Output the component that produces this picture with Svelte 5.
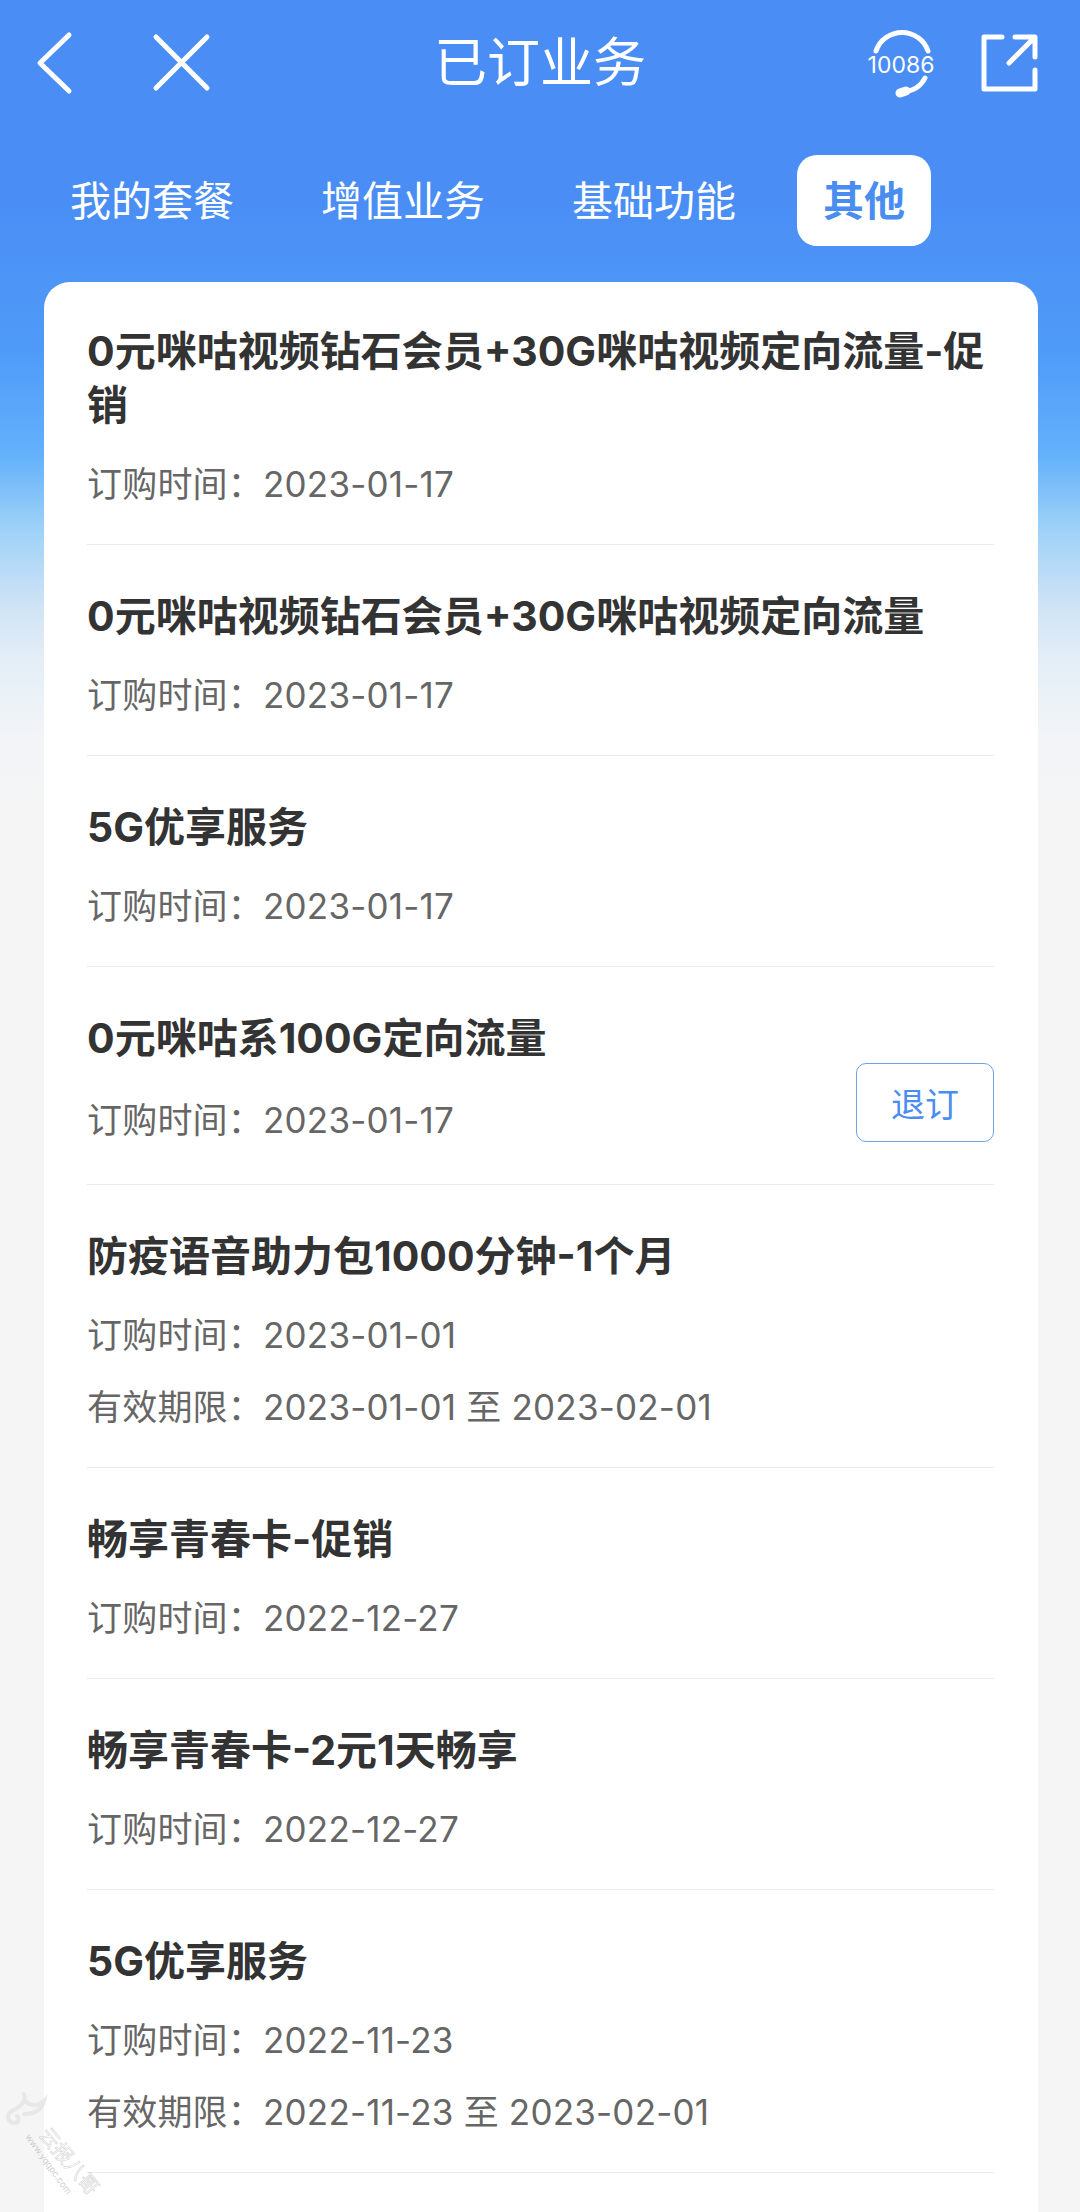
<script>
  const tabs = ["我的套餐", "增值业务", "基础功能", "其他"];
  const activeTab = "其他";

  const rows = [
    { name: "0元咪咕视频钻石会员+30G咪咕视频定向流量-促销", date: "2023-01-17" },
    { name: "0元咪咕视频钻石会员+30G咪咕视频定向流量", date: "2023-01-17" },
    { name: "5G优享服务", date: "2023-01-17" },
    { name: "0元咪咕系100G定向流量", date: "2023-01-17", cancel: true },
    { name: "防疫语音助力包1000分钟-1个月", date: "2023-01-01", range: "2023-01-01 至 2023-02-01" },
    { name: "畅享青春卡-促销", date: "2022-12-27" },
    { name: "畅享青春卡-2元1天畅享", date: "2022-12-27" },
    { name: "5G优享服务", date: "2022-11-23", range: "2022-11-23 至 2023-02-01" }
  ];
</script>

<div class="page">
  <header class="nav">
    <div class="nav-side">
      <svg class="icon" viewBox="0 0 64 64"><path d="M45 5 16 33l29 28" /></svg>
      <svg class="icon close" viewBox="0 0 64 64"><path d="M8 7l51 51M59 7 8 58" /></svg>
    </div>
    <h1>已订业务</h1>
    <div class="nav-side right">
      <svg class="icon" viewBox="0 0 64 64">
        <path d="M6 21A27.5 27.5 0 0 1 58 21" />
        <text x="31" y="43">10086</text>
        <path d="M55 48C51 56 44 61 33 62" />
        <path class="thick" d="M30 63l6-2" />
      </svg>
      <svg class="icon" viewBox="0 0 64 64">
        <path d="M24 7H6v52h51V40" />
        <path d="M31 33 55 9M37 7h20v20" />
      </svg>
    </div>
  </header>

  <nav class="tabs">
    {#each tabs as tab}
      <div class="tab" class:active={tab === activeTab}>{tab}</div>
    {/each}
  </nav>

  <main class="card">
    {#each rows as row}
      <section class="row" class:has-action={row.cancel}>
        <div class="info">
          <div class="name">{row.name}</div>
          <div class="sub"><span class="label">订购时间：</span>{row.date}</div>
          {#if row.range}
            <div class="sub"><span class="label">有效期限：</span>{row.range}</div>
          {/if}
        </div>
        {#if row.cancel}
          <button class="cancel">退订</button>
        {/if}
      </section>
    {/each}
  </main>

  <svg class="watermark" viewBox="0 0 100 132">
    <path d="M24 14c3 8-4 13-12 17-6 3-5 11 2 12 5 0 6-5 3-7M26 22c6 5 14 3 18-1-2 8-10 14-20 13" />
    <text class="wm-cn" transform="translate(38 55) rotate(50)">云报八哥</text>
    <text class="wm-en" transform="translate(25 57) rotate(54)">www.yqqpc.com</text>
  </svg>
</div>

<style>
  :global(body) {
    margin: 0;
    font-family: Inter, "Noto Sans CJK SC", sans-serif;
  }

  .page {
    position: relative;
    display: flex;
    flex-direction: column;
    height: 2212px;
    overflow: hidden;
    background: linear-gradient(
      180deg,
      #4a8df5 0,
      #4a8ef5 200px,
      #4f9bf8 353px,
      #63b1fb 455px,
      #9cd0f8 526px,
      #d0e4f5 608px,
      #e4eef6 660px,
      #f2f4f7 735px,
      #f5f5f5 812px
    );
  }

  .nav {
    display: grid;
    grid-template-columns: 1fr auto 1fr;
    align-items: center;
    height: 124px;
    color: #fff;
  }

  .nav h1 {
    margin: 0 0 6px;
    font-size: 53px;
    font-weight: 400;
  }

  .nav-side {
    display: flex;
    align-items: center;
    gap: 60px;
    padding-left: 24px;
  }

  .nav-side.right {
    justify-content: flex-end;
    gap: 44px;
    padding: 0 38px 0 0;
  }

  .icon {
    width: 64px;
    height: 64px;
    overflow: visible;
  }

  .icon path {
    fill: none;
    stroke: #fff;
    stroke-width: 5;
    stroke-linecap: round;
    stroke-linejoin: round;
  }

  .icon path.thick {
    stroke-width: 9;
  }

  .icon text {
    fill: #fff;
    font-family: Inter, sans-serif;
    font-size: 23px;
    text-anchor: middle;
  }

  .tabs {
    display: flex;
    gap: 35px;
    height: 91px;
    margin-top: 31px;
    padding-left: 44px;
  }

  .tab {
    display: flex;
    align-items: center;
    padding: 0 26px 6px;
    border-radius: 20px;
    color: #fff;
    font-size: 41px;
  }

  .tab.active {
    background: #fff;
    color: #4a8df0;
    font-weight: 700;
  }

  .card {
    flex: 1;
    margin: 36px 42px 0 44px;
    padding: 0 44px 0 43px;
    border-radius: 26px 26px 0 0;
    background: #fff;
  }

  .row {
    display: flex;
    padding: 42px 0 36px;
    border-bottom: 1px solid #eaeaea;
  }

  .row.has-action {
    padding-bottom: 40px;
  }

  .row + .row {
    padding-top: 44px;
  }

  .info {
    flex: 1;
    min-width: 0;
  }

  .name {
    color: #333;
    font-size: 41px;
    font-weight: 700;
    line-height: 54px;
  }

  .sub {
    margin-top: 24px;
    color: #666;
    font-size: 35px;
    letter-spacing: 0.2px;
    line-height: 48px;
  }

  .name + .sub {
    margin-top: 28px;
  }

  .has-action .name + .sub {
    margin-top: 31px;
  }

  .cancel {
    align-self: flex-end;
    width: 138px;
    height: 79px;
    margin-bottom: 2px;
    padding: 0;
    border: 1px solid #6ea3e6;
    border-radius: 10px;
    background: #fff;
    color: #4a8df0;
    font-family: inherit;
    font-size: 34px;
  }

  .watermark {
    position: absolute;
    left: 0;
    bottom: 0;
    width: 100px;
    height: 132px;
    overflow: visible;
    pointer-events: none;
  }

  .watermark path {
    fill: none;
    stroke: rgba(225, 225, 225, 0.7);
    stroke-width: 4;
    stroke-linecap: round;
  }

  .wm-cn {
    fill: none;
    stroke: rgba(200, 200, 200, 0.8);
    stroke-width: 0.6;
    font-size: 20px;
  }

  .wm-en {
    fill: rgba(190, 190, 190, 0.8);
    font-size: 9px;
  }
</style>
